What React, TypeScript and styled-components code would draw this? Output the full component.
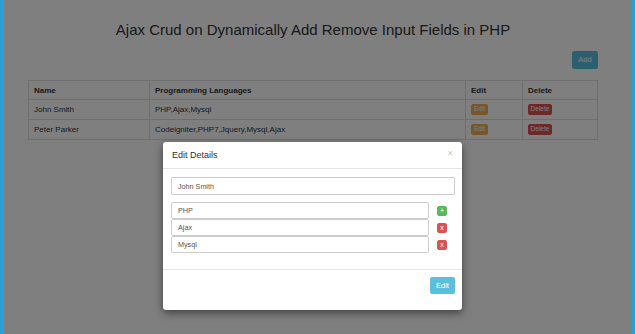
import styled, { createGlobalStyle } from "styled-components";

const GlobalStyle = createGlobalStyle`
  html, body {
    margin: 0;
    padding: 0;
    width: 635px;
    height: 334px;
    overflow: hidden;
    font-family: "Liberation Sans", Arial, sans-serif;
    color: #333;
  }
  * { box-sizing: border-box; }
`;

const Frame = styled.div`
  display: flex;
  width: 635px;
  height: 334px;
`;

const Stripe = styled.div<{ w: number }>`
  width: ${(p) => p.w}px;
  background: #2a9fd6;
  flex-shrink: 0;
`;

const Main = styled.div`
  position: relative;
  flex: 1;
  background: #fff;
  padding: 0 34px 0 24px;
`;

const Title = styled.h3`
  margin: 0 -34px 0 -24px;
  padding: 21px 10px 0 0;
  height: 46px;
  font-size: 15px;
  font-weight: 400;
  text-align: center;
  color: #333;
`;

const Toolbar = styled.div`
  display: flex;
  justify-content: flex-end;
  margin-top: 5px;
  margin-bottom: 11px;
`;

const Btn = styled.button<{ color: string; w: number; h: number; fs?: number }>`
  width: ${(p) => p.w}px;
  height: ${(p) => p.h}px;
  padding: 0;
  border: 1px solid ${(p) => p.color};
  border-radius: 2px;
  background: ${(p) => p.color};
  color: #fff;
  font-family: "Liberation Sans", Arial, sans-serif;
  font-size: ${(p) => p.fs ?? 6.5}px;
  line-height: 1;
  display: inline-flex;
  align-items: center;
  justify-content: center;
`;

const Table = styled.table`
  width: 100%;
  border-collapse: collapse;
  font-size: 8px;
  color: #333;
`;

const Th = styled.th<{ w?: number }>`
  width: ${(p) => (p.w ? `${p.w}px` : "auto")};
  border: 1px solid #ddd;
  text-align: left;
  font-weight: 700;
  height: 19px;
  padding: 0 5px;
`;

const Td = styled.td`
  border: 1px solid #ddd;
  height: 20px;
  padding: 0 5px;
  vertical-align: middle;
`;

const Backdrop = styled.div`
  position: absolute;
  inset: 0;
  background: rgba(0, 0, 0, 0.5);
`;

const Modal = styled.div`
  position: absolute;
  left: 159px;
  top: 142px;
  width: 299px;
  height: 168px;
  background: #fff;
  border-radius: 3px;
  box-shadow: 0 3px 9px rgba(0, 0, 0, 0.5);
  display: flex;
  flex-direction: column;
`;

const ModalHeader = styled.div`
  display: flex;
  align-items: center;
  justify-content: space-between;
  height: 27px;
  padding: 0 9px 0 9px;
  border-bottom: 1px solid #e5e5e5;
  font-size: 9px;
  color: #333;
`;

const Close = styled.span`
  color: #c8c8c8;
  font-size: 10px;
  margin-top: -4px;
`;

const ModalBody = styled.div`
  padding: 8px 7px 0 8px;
  height: 101px;
  border-bottom: 1px solid #e5e5e5;
`;

const Input = styled.div`
  display: flex;
  align-items: center;
  height: 18px;
  padding: 0 6px;
  border: 1px solid #ccc;
  border-radius: 2px;
  font-size: 7.2px;
  color: #555;
  background: #fff;
`;

const NameInput = styled(Input)`
  margin-bottom: 7px;
`;

const FieldRow = styled.div`
  display: flex;
  align-items: center;
  height: 17px;
  ${Input} {
    width: 258px;
    height: 17px;
  }
`;

const RowBtn = styled(Btn)`
  margin-left: 8px;
`;

const ModalFooter = styled.div`
  display: flex;
  justify-content: flex-end;
  padding: 7px 7px 0 0;
`;

const rows = [
  { name: "John Smith", langs: "PHP,Ajax,Mysql" },
  { name: "Peter Parker", langs: "Codeigniter,PHP7,Jquery,Mysql,Ajax" },
];

const fields = ["PHP", "Ajax", "Mysql"];

export default function App() {
  return (
    <Frame>
      <GlobalStyle />
      <Stripe w={4} />
      <Main>
        <Title>Ajax Crud on Dynamically Add Remove Input Fields in PHP</Title>
        <Toolbar>
          <Btn color="#5bc0de" w={26} h={18} fs={7.5}>
            Add
          </Btn>
        </Toolbar>
        <Table>
          <thead>
            <tr>
              <Th w={121}>Name</Th>
              <Th w={316}>Programming Languages</Th>
              <Th w={57}>Edit</Th>
              <Th>Delete</Th>
            </tr>
          </thead>
          <tbody>
            {rows.map((r) => (
              <tr key={r.name}>
                <Td>{r.name}</Td>
                <Td>{r.langs}</Td>
                <Td>
                  <Btn color="#f0ad4e" w={17} h={11}>
                    Edit
                  </Btn>
                </Td>
                <Td>
                  <Btn color="#d9534f" w={24} h={11}>
                    Delete
                  </Btn>
                </Td>
              </tr>
            ))}
          </tbody>
        </Table>
        <Backdrop />
        <Modal>
          <ModalHeader>
            <span>Edit Details</span>
            <Close>×</Close>
          </ModalHeader>
          <ModalBody>
            <NameInput>John Smith</NameInput>
            {fields.map((f, i) => (
              <FieldRow key={f}>
                <Input>{f}</Input>
                <RowBtn
                  color={i === 0 ? "#5cb85c" : "#d9534f"}
                  w={10}
                  h={10}
                  fs={7}
                >
                  {i === 0 ? "+" : "x"}
                </RowBtn>
              </FieldRow>
            ))}
          </ModalBody>
          <ModalFooter>
            <Btn color="#5bc0de" w={25} h={17} fs={7.5}>
              Edit
            </Btn>
          </ModalFooter>
        </Modal>
      </Main>
      <Stripe w={3} />
    </Frame>
  );
}
